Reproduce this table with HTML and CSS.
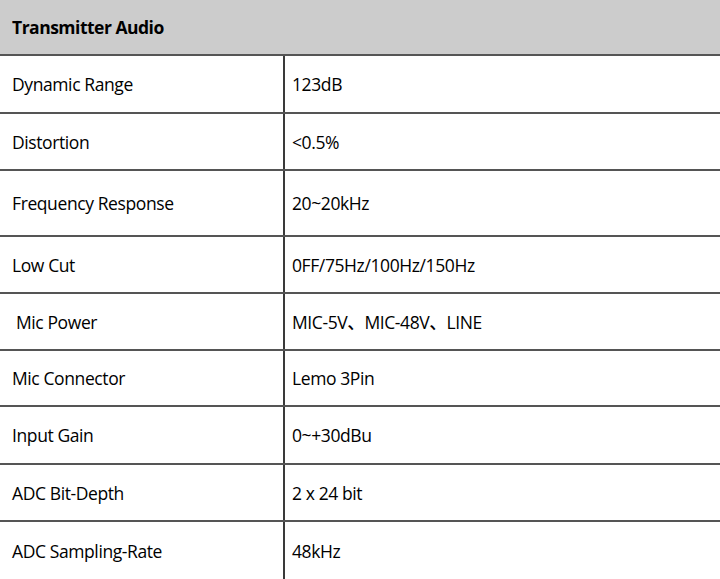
FILE: index.html
```html
<!DOCTYPE html>
<html>
<head>
<meta charset="utf-8">
<link rel="stylesheet" href="styles.css">
</head>
<body>
<div class="spec">
  <div class="head">Transmitter Audio</div>
  <div class="row h58"><div class="label">Dynamic Range</div><div class="value">123dB</div></div>
  <div class="row h57"><div class="label">Distortion</div><div class="value">&lt;0.5%</div></div>
  <div class="row h66"><div class="label">Frequency Response</div><div class="value">20~20kHz</div></div>
  <div class="row h57"><div class="label">Low Cut</div><div class="value">0FF/75Hz/100Hz/150Hz</div></div>
  <div class="row h57"><div class="label indent">Mic Power</div><div class="value">MIC-5V、MIC-48V、LINE</div></div>
  <div class="row h56"><div class="label">Mic Connector</div><div class="value">Lemo 3Pin</div></div>
  <div class="row h58"><div class="label">Input Gain</div><div class="value">0~+30dBu</div></div>
  <div class="row h57"><div class="label">ADC Bit-Depth</div><div class="value">2 x 24 bit</div></div>
  <div class="row h59"><div class="label">ADC Sampling-Rate</div><div class="value">48kHz</div></div>
</div>
</body>
</html>
```
FILE: styles.css
```css
html, body {
  margin: 0;
  padding: 0;
  background: #fff;
}
.spec {
  width: 720px;
  font-family: "Open Sans", "Noto Sans CJK SC", sans-serif;
  font-size: 17.5px;
  font-weight: 500;
  letter-spacing: -0.4px;
  color: #000;
}
.head {
  height: 54px;
  background: #cccccc;
  display: flex;
  align-items: center;
  padding-left: 12px;
  font-weight: 700;
  letter-spacing: -0.5px;
}
.row {
  display: flex;
  border-top: 2px solid #555;
  box-sizing: border-box;
}
.h56 { height: 56px; }
.h57 { height: 57px; }
.h58 { height: 58px; }
.h59 { height: 59px; }
.h66 { height: 66px; }
.label {
  width: 285px;
  flex: none;
  box-sizing: border-box;
  border-right: 2px solid #3a3a3a;
  padding-left: 12px;
  display: flex;
  align-items: center;
}
.label.indent { padding-left: 16px; }
.value {
  flex: 1;
  padding-left: 7px;
  display: flex;
  align-items: center;
}
```
